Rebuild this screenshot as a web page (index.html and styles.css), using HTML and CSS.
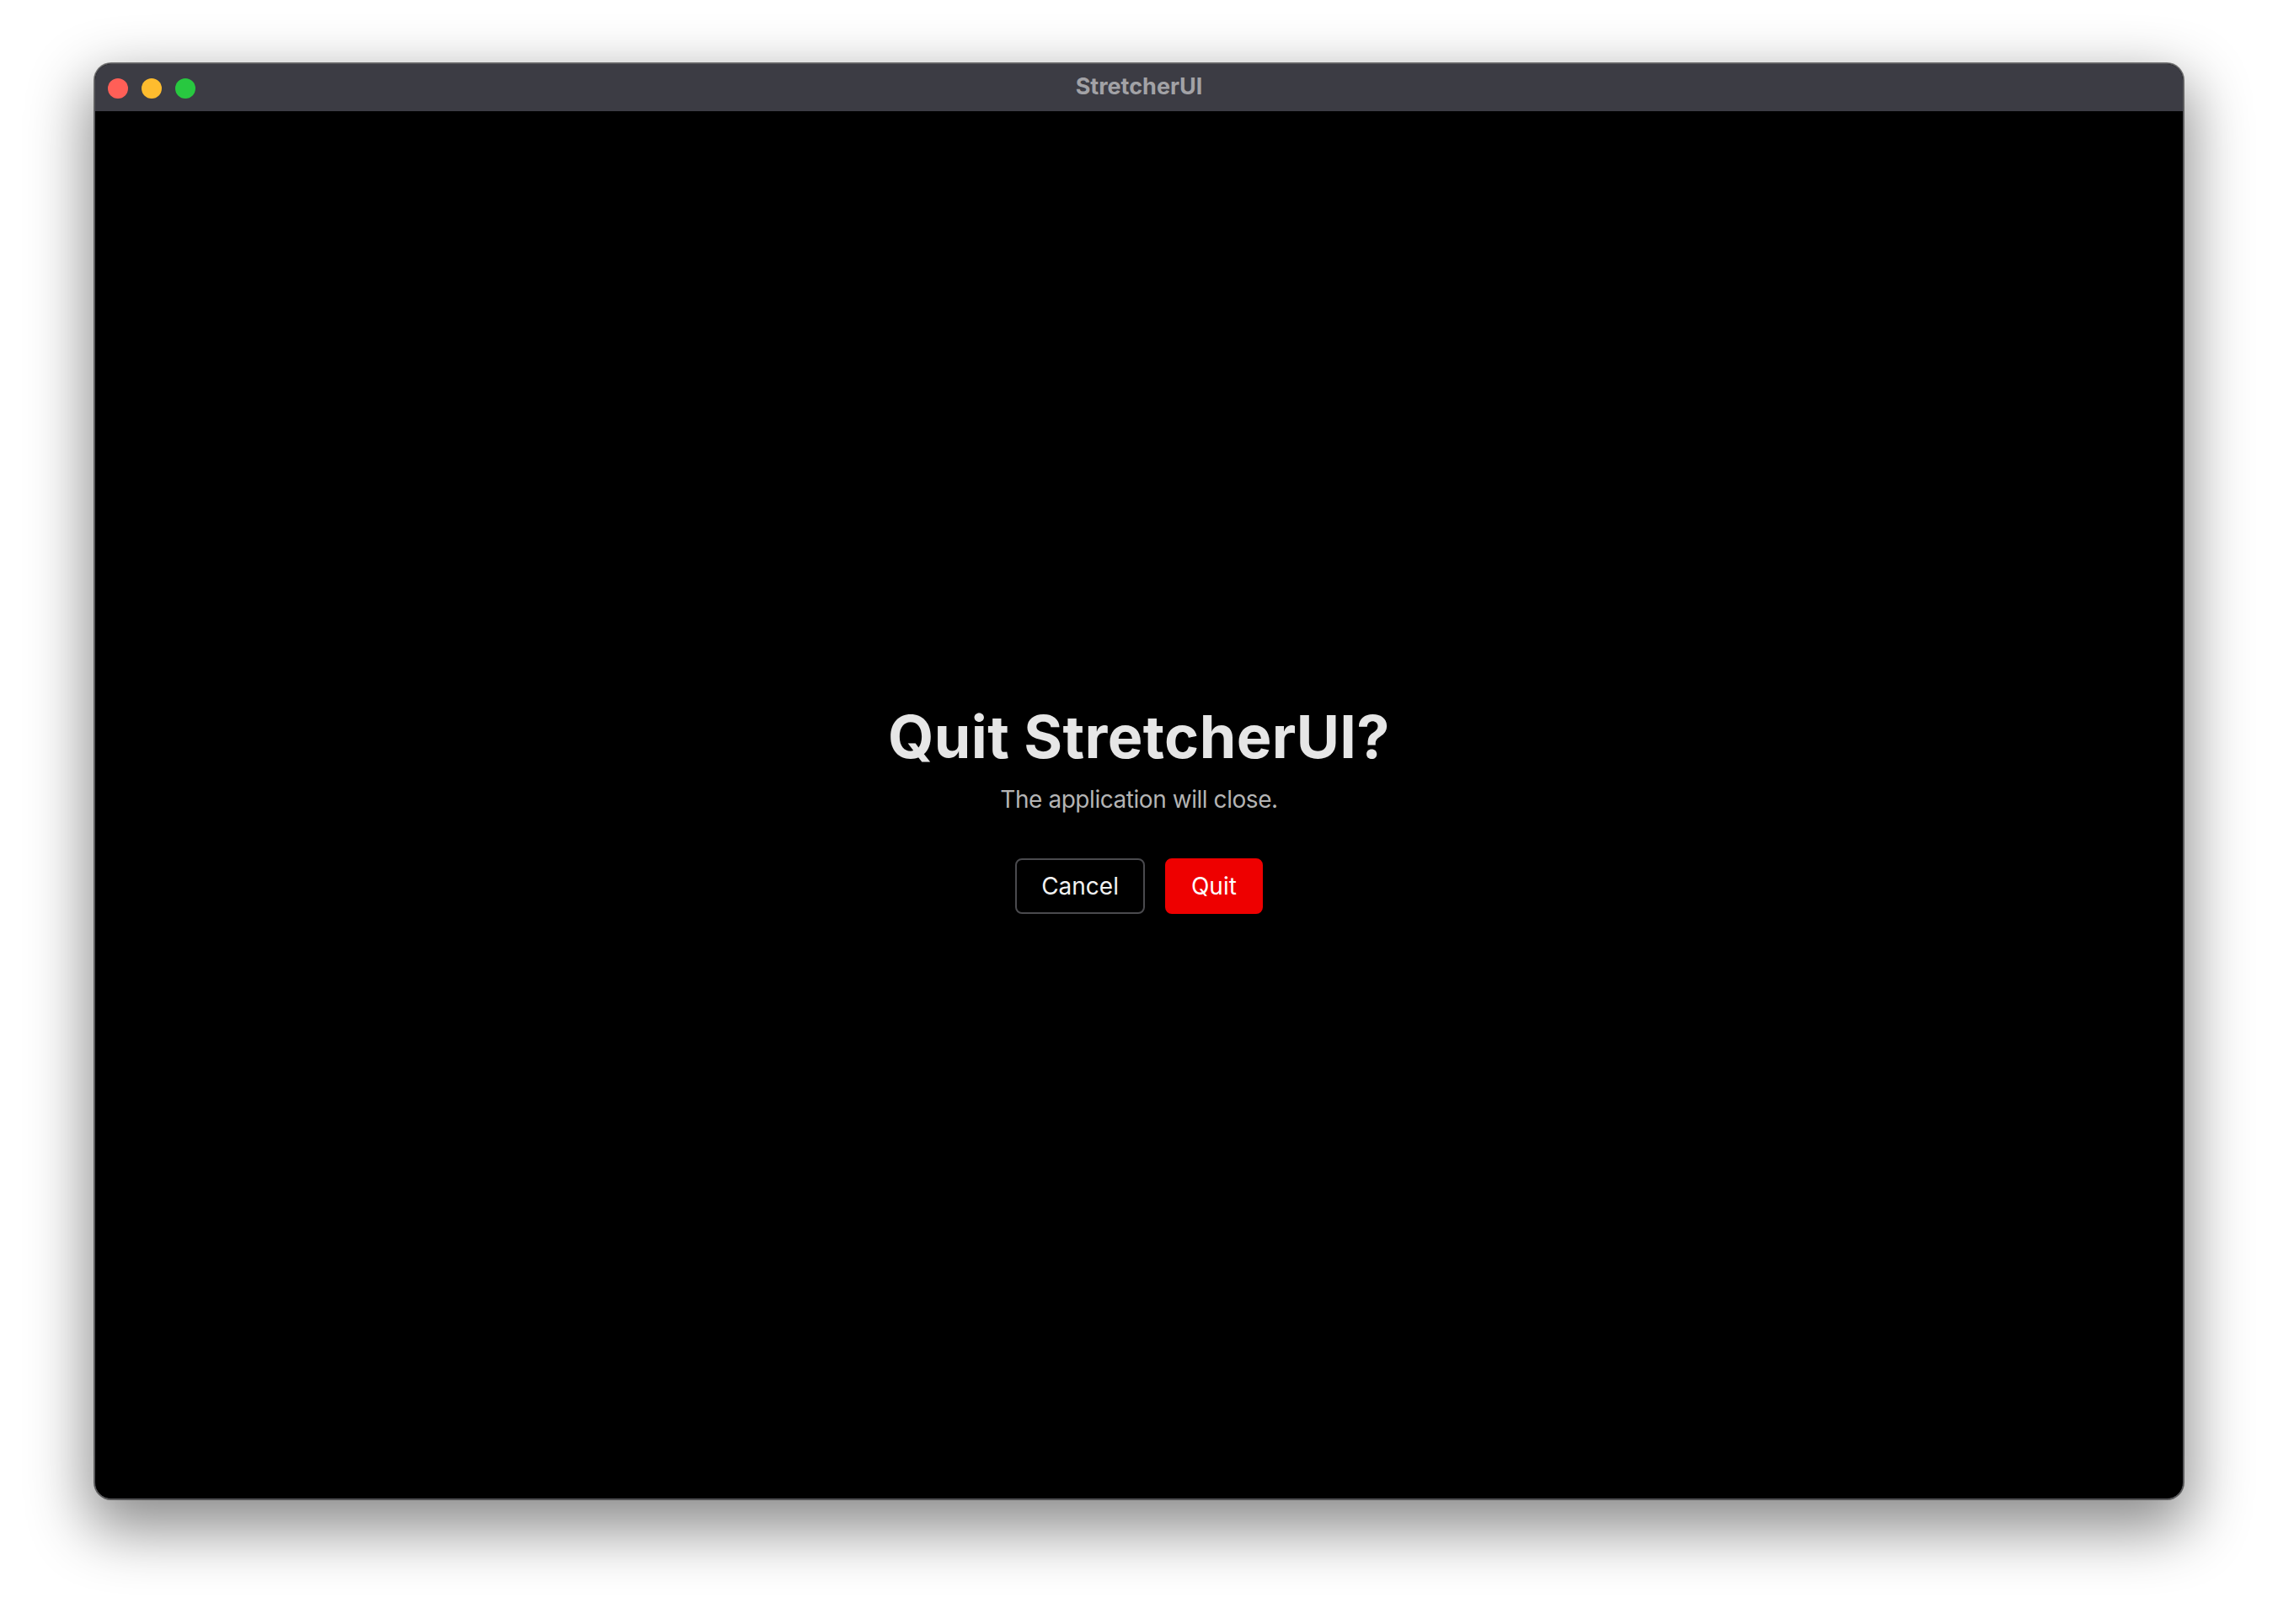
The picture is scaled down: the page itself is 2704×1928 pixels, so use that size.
FILE: index.html
```html
<!DOCTYPE html>
<html lang="en">
<head>
<meta charset="utf-8">
<title>StretcherUI</title>
<link rel="stylesheet" href="styles.css">
</head>
<body>
<div class="window">
  <div class="titlebar">
    <div class="lights">
      <span class="light red"></span>
      <span class="light yellow"></span>
      <span class="light green"></span>
    </div>
    <div class="title">StretcherUI</div>
    <div class="spacer"></div>
  </div>
  <main class="content">
    <h1 class="heading">Quit StretcherUI?</h1>
    <p class="subtitle">The application will close.</p>
    <div class="actions">
      <button class="btn btn-cancel">Cancel</button>
      <button class="btn btn-quit">Quit</button>
    </div>
  </main>
</div>
</body>
</html>
```
FILE: styles.css
```css
html, body {
  margin: 0;
  padding: 0;
  background: #ffffff;
}
body {
  width: 2704px;
  height: 1928px;
  box-sizing: border-box;
  padding: 75px 112px 148px 112px;
  font-family: Inter, "Noto Sans", "Liberation Sans", sans-serif;
}
.window {
  box-sizing: border-box;
  width: 2480px;
  height: 1705px;
  display: flex;
  flex-direction: column;
  border: 1px solid #5a5a5e;
  border-radius: 20px;
  overflow: hidden;
  background: #000;
  box-shadow: 0 28px 70px 8px rgba(0, 0, 0, 0.45), 0 0 0 1px rgba(0,0,0,0.5);
}
.titlebar {
  height: 56px;
  flex: none;
  background: #3c3c44;
  display: grid;
  grid-template-columns: 1fr auto 1fr;
  align-items: center;
}
.lights {
  display: flex;
  gap: 16px;
  padding-left: 15px;
  padding-top: 2px;
}
.light {
  width: 24px;
  height: 24px;
  border-radius: 50%;
  display: block;
}
.red { background: #ff5f57; }
.yellow { background: #febc2e; }
.green { background: #28c840; }
.title {
  font-size: 27px;
  font-weight: 700;
  color: #a2a2a6;
  letter-spacing: 0;
  padding-bottom: 3px;
}
.content {
  flex: 1;
  display: flex;
  flex-direction: column;
  align-items: center;
  justify-content: center;
  padding-top: 9px;
}
.heading {
  margin: 0;
  font-size: 70px;
  line-height: 80px;
  font-weight: 700;
  color: #e6e6e6;
  letter-spacing: 0.4px;
}
.subtitle {
  margin: 16px 0 0 0;
  font-size: 28px;
  line-height: 36px;
  color: #b4b4b4;
  letter-spacing: -0.45px;
}
.actions {
  margin-top: 52px;
  display: flex;
  gap: 24px;
}
.btn {
  font-family: inherit;
  font-size: 28px;
  line-height: 34px;
  padding: 14px 29px;
  border-radius: 8px;
  border: 2px solid #4a4a4e;
  color: #f2f2f2;
  background: #000;
  cursor: pointer;
}
.btn-quit {
  background: #ee0000;
  border-color: #ee0000;
  color: #fff;
}
```
